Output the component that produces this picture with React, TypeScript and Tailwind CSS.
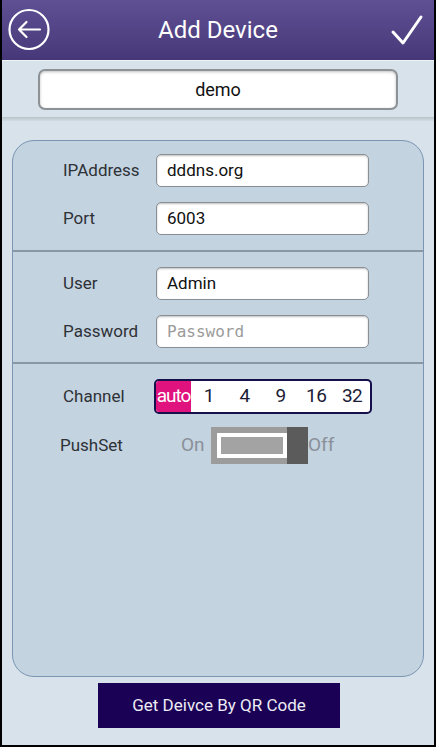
import * as React from "react"

const font = { fontFamily: "Roboto, 'Noto Sans', sans-serif" }

function Field({ label, value, placeholder }: { label: string; value?: string; placeholder?: string }) {
  return (
    <div className="flex items-center pl-[50px]">
      <span className="w-[93px] text-[17px] text-[#2e3136]">{label}</span>
      <div className="flex h-[33px] w-[213px] items-center rounded-[5px] border-[1.5px] border-[#8a8f94] bg-white pl-[10px] shadow-[inset_0_1px_2px_rgba(0,0,0,0.25)]">
        {value ? (
          <span className="text-[17px] text-[#111]">{value}</span>
        ) : (
          <span className="text-[16px] text-[#9a9a9a]" style={{ fontFamily: "'DejaVu Sans Mono', monospace" }}>
            {placeholder}
          </span>
        )}
      </div>
    </div>
  )
}

export default function App() {
  const channels = ["1", "4", "9", "16", "32"]

  return (
    <div className="flex h-[747px] w-[436px] flex-col border-x-2 border-b-2 border-black bg-[#d8e2ea]" style={font}>
      {/* header */}
      <div className="relative flex h-[60px] items-center justify-center bg-gradient-to-b from-[#5f5094] to-[#463878]">
        <svg className="absolute left-[6px] top-[8px]" width="44" height="44" viewBox="0 0 44 44" fill="none" stroke="white" strokeWidth="2.2" strokeLinecap="round" strokeLinejoin="round">
          <circle cx="21" cy="21.5" r="19.5" />
          <path d="M11 21.5h21M18.5 14l-7.5 7.5 7.5 7.5" />
        </svg>
        <span className="text-[24px] text-white">Add Device</span>
        <svg className="absolute right-[10px] top-[13px]" width="34" height="34" viewBox="0 0 34 34" fill="none" stroke="white" strokeWidth="3" strokeLinecap="round" strokeLinejoin="round">
          <path d="M3 19l10 11L31 4" />
        </svg>
      </div>
      <div className="h-px bg-[#eef3f6]" />

      {/* name */}
      <div className="px-[36px] pt-[8px]">
        <div className="flex h-[41px] items-center justify-center rounded-[7px] border-2 border-[#8d9296] bg-white shadow-[inset_0_1px_3px_rgba(0,0,0,0.25)]">
          <span className="text-[18px] text-[#111]">demo</span>
        </div>
      </div>
      <div className="mt-[7px] h-[4px] bg-gradient-to-b from-[#b9c3ca] to-[#d2dbe2]" />

      {/* panel */}
      <div className="mx-[10px] mt-[19px] flex h-[537px] flex-col rounded-[22px] border-[1.5px] border-[#7b95b3] bg-[#c3d3e0]">
        <div className="flex flex-col gap-[15px] pb-[15px] pt-[13px]">
          <Field label="IPAddress" value="dddns.org" />
          <Field label="Port" value="6003" />
        </div>
        <div className="h-[2px] bg-[#8a98a3]" />
        <div className="flex flex-col gap-[15px] pb-[14px] pt-[15px]">
          <Field label="User" value="Admin" />
          <Field label="Password" placeholder="Password" />
        </div>
        <div className="h-[2px] bg-[#8a98a3]" />
        <div className="flex flex-col gap-[13px] pt-[15px]">
          <div className="flex items-center pl-[50px]">
            <span className="w-[91px] text-[17px] text-[#2e3136]">Channel</span>
            <div className="flex h-[35px] w-[218px] overflow-hidden rounded-[5px] border-2 border-[#160f4c] bg-white">
              <div className="flex w-[35px] items-center justify-center bg-[#e0137e] text-[19px] tracking-[-1px] text-white">auto</div>
              {channels.map((c) => (
                <div key={c} className="flex flex-1 items-center justify-center text-[19px] tracking-[-0.5px] text-[#1c1c36]">
                  {c}
                </div>
              ))}
            </div>
          </div>
          <div className="flex items-center pl-[47px]">
            <span className="w-[121px] text-[17px] text-[#2e3136]">PushSet</span>
            <span className="w-[30px] text-[19px] text-[#8a9098]">On</span>
            <div className="flex h-[37px] w-[97px] bg-[#9c9c9c]">
              <div className="ml-[6px] mt-[6px] h-[25px] w-[70px] border-[4px] border-white bg-[#a3a3a3]" />
              <div className="ml-auto h-full w-[21px] bg-[#5b5b5b]" />
            </div>
            <span className="text-[19px] text-[#8a9098]">Off</span>
          </div>
        </div>
      </div>

      {/* qr button */}
      <div className="mt-[6px] flex justify-center pl-[2px]">
        <div className="flex h-[45px] w-[242px] items-center justify-center bg-[#1b0156]">
          <span className="text-[17px] text-[#ececf4]">Get Deivce By QR Code</span>
        </div>
      </div>
    </div>
  )
}
